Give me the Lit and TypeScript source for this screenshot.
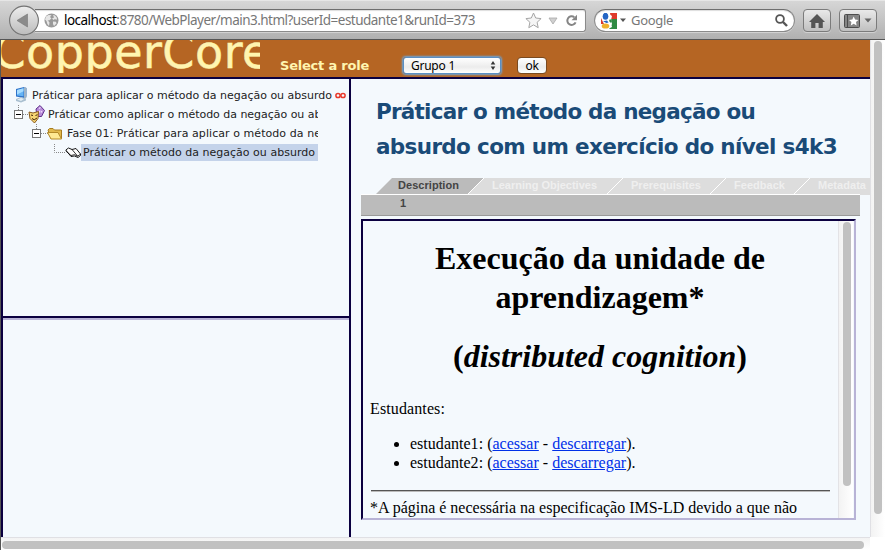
import { LitElement, html, css, svg } from "lit";
import { customElement, property } from "lit/decorators.js";

/** A single line of text whose tracking is adjusted to fill the given width. */
@customElement("fit-text")
class FitText extends LitElement {
  @property({ type: Number }) width = 0;
  static styles = css`
    :host { display: inline-block; white-space: nowrap; flex: none; text-align: left; }
    .run { display: inline-block; }
  `;
  render() {
    return html`<span class="run"><slot></slot></span>`;
  }
  firstUpdated() {
    const run = this.renderRoot.querySelector(".run") as HTMLElement;
    const count = (this.textContent || "").length;
    const natural = run.getBoundingClientRect().width;
    if (natural > 0 && count > 1) {
      this.style.letterSpacing = `${(this.width - natural) / count}px`;
    }
  }
}

@customElement("browser-toolbar")
class BrowserToolbar extends LitElement {
  static styles = css`
    :host {
      display: flex; align-items: flex-start; box-sizing: border-box; height: 40px; padding: 5px 0 0 9px;
      background: linear-gradient(#d6d6d6, #c6c6c6 45%, #b0b0b0);
      border-top: 1px solid #e6e6e6; border-bottom: 1px solid #555;
      font: 13px/20px "Noto Sans", sans-serif; color: #777;
    }
    svg { display: block; flex: none; }
    .back { position: relative; margin-top: -1px; }
    .field {
      box-sizing: border-box; height: 23px; margin-top: 3px; display: flex; align-items: center;
      background: #fff; border: 1px solid #8a8a8a; border-top-color: #6e6e6e;
      box-shadow: inset 0 1px 1px #ddd, 0 1px 0 #d2d2d2;
    }
    .url { width: 551px; margin-left: -5px; border-left: 0; border-radius: 0 3px 3px 0; padding-left: 9px; }
    .url fit-text { margin-left: 5px; width: 411px; font-size: 13.5px; margin-top: -1px; }
    .host { color: #000; }
    .star { margin-left: 50px; }
    .drop { margin-left: 6px; }
    .reload { margin-left: 7px; }
    .search { width: 201px; margin-left: 8px; border-radius: 12px; padding-left: 6px; }
    .search .arrow { margin-left: 2px; }
    .search fit-text { margin-left: 4px; width: 42px; margin-top: -1px; }
    .lens { margin-left: 102px; }
    .button {
      box-sizing: border-box; height: 23px; margin-top: 3px; border: 1px solid #7b7b7b; border-radius: 4px;
      background: linear-gradient(#e9e9e9, #c0c0c0); display: flex; align-items: center; justify-content: center;
      box-shadow: 0 1px 0 #d2d2d2;
    }
    .home { width: 28px; margin-left: 8px; }
    .marks { width: 38px; margin-left: 8px; gap: 4px; }
  `;
  render() {
    return html`
      <svg class="back" width="31" height="31" viewBox="0 0 31 31">
        <defs><linearGradient id="b" x2="0" y2="1"><stop stop-color="#ededed" /><stop offset="1" stop-color="#bcbcbc" /></linearGradient></defs>
        <circle cx="15" cy="15.5" r="14.4" fill="url(#b)" stroke="#737373" stroke-width="1.1" />
        <path d="M8 15.5 18.5 9v13z" fill="#8b8b8b" stroke="#777" stroke-width=".6" />
      </svg>
      <div class="field url">
        <svg width="15" height="15" viewBox="0 0 15 15">
          <circle cx="7.5" cy="7.5" r="7" fill="#999" />
          <path d="M2 3.5 4.5 2l3 .3L6 4l1.5 1.5L5 7.5 3.5 7 5.5 9.5 5 13 3.3 11 2.5 8 1 6.5zM9 2l2 .5 2 2.5-.5 2L11 6 9.5 7 8 5.5l2-1zM9 8.500l3 .3.5 1.700L10 13 9 11z" fill="#e6e6e6" />
        </svg>
        <fit-text width="411"><span class="host">localhost</span>:8780/WebPlayer/main3.html?userId=estudante1&amp;runId=373</fit-text>
        <svg class="star" width="17" height="17" viewBox="0 0 17 17">
          <path d="M8.5 1 10.7 6l5.4.6-4 3.700 1.100 5.400-4.700-2.800-4.700 2.800 1.100-5.400-4-3.700L6.300 6z" fill="#f5f5f5" stroke="#a5a5a5" />
        </svg>
        <svg class="drop" width="10" height="8" viewBox="0 0 10 8"><path d="M1 1h8L5 7z" fill="#d0d0d0" stroke="#a8a8a8" stroke-width=".8" /></svg>
        <svg class="reload" width="13" height="13" viewBox="0 0 13 13">
          <path d="M9.300 3.200A4.300 4.300 0 1 0 10.600 8.300" fill="none" stroke="#858585" stroke-width="2" />
          <path d="M12 .8V6.300H6.500z" fill="#858585" />
        </svg>
      </div>
      <div class="field search">
        <svg width="16" height="16" viewBox="0 0 16 16">
          <rect width="16" height="16" rx="1" fill="#fff" />
          <path d="M9 0h7v6H10z" fill="#de3a2b" /><path d="M10 6h6v10H8l3-5z" fill="#2f8a43" />
          <path d="M0 5v6h3z" fill="#d63b2c" />
          <path d="M8 1l3 2-1 4-3 1 3 2 1 4-4 2z" fill="#fff" />
          <path d="M9 6l2 2-1 2-2-2z" fill="#2f8a43" />
          <ellipse cx="4.500" cy="3.300" rx="2.800" ry="3.500" fill="#2465c4" /><ellipse cx="4.500" cy="13" rx="3.800" ry="2.600" fill="#eeb12c" />
          <path d="M2 8.300 6 7.500l1.500 2-2 .5z" fill="#2465c4" />
        </svg>
        <svg class="arrow" width="8" height="5" viewBox="0 0 8 5"><path d="M1 .5h6L4 4z" fill="#555" /></svg>
        <fit-text width="42">Google</fit-text>
        <svg class="lens" width="13" height="13" viewBox="0 0 13 13">
          <circle cx="5" cy="5" r="3.900" fill="none" stroke="#555" stroke-width="1.800" /><path d="m8 8 4 4" stroke="#555" stroke-width="2.400" />
        </svg>
      </div>
      <div class="button home">
        <svg width="16" height="14" viewBox="0 0 16 14"><path d="M8 0 16 8h-2.200v6H9.600V9H6.400v5H2.200V8H0z" fill="#555" /></svg>
      </div>
      <div class="button marks">
        <svg width="16" height="14" viewBox="0 0 16 14">
          <rect x=".5" y=".5" width="15" height="13" rx="1" fill="#858585" stroke="#4c4c4c" /><path d="M3.500 1v12" stroke="#4c4c4c" />
          <path d="m9.700 2.500 1.400 3 3.300.4-2.400 2.200.6 3.300-2.900-1.600-2.900 1.600.6-3.300L5 5.900l3.300-.4z" fill="#fff" />
        </svg>
        <svg width="8" height="5" viewBox="0 0 8 5"><path d="M.5.500h7L4 4.500z" fill="#666" /></svg>
      </div>`;
  }
}

const computer = svg`<path d="M2 2 10 0l2.500 1v8.500L10 11l-8-1.500z" fill="#2f73c9"/><path d="M3 3 9.500 1.300v8L3 8.500z" fill="#65b4f5"/><path d="M3 3 9.500 1.300v3L3 7.500z" fill="#a6dcff"/><path d="M10 0l2.500 1v9.500L10 12.500z" fill="#9fb4c6"/><path d="M2 12 7 10l5 1.500v2L7 15.500 2 14z" fill="#a9bfd0"/><path d="m3 12.500 4-1.500 3 1-3 2z" fill="#e2edf3"/>`;
const masks = svg`<path d="M8 3.500 12 0l4.500 5-3 6H9z" fill="#b78bd8" stroke="#60308c"/><path d="m11 3 1.500-1M14 5.500l-1 1.500M12 5l-1 2" stroke="#f2dcff" stroke-width="1.300"/><path d="M1 6.500 5 7.500l5.500-1.500-.5 7L6.500 17.500 2 13z" fill="#f7d774" stroke="#8a5a1b"/><path d="m3 9.500 2 .5M7.500 10l2-.8M4 13l2.200 1.300L9 12.500" fill="none" stroke="#442408"/>`;
const folder = svg`<path d="M1 3.500 2.500 2H6l1.500 1.500H14.500V12H4z" fill="#e2b94c" stroke="#a87d20"/><path d="M.5 6H11l3.500 6.500H4z" fill="#ffe993" stroke="#b48a29"/>`;
const book = svg`<path d="M.8 4.500 3.500 2.500 7 4l4-1 4.500 5.500v1.500L13 12 9.500 10.500 6 11z" fill="#fff" stroke="#000" stroke-width=".9"/><path d="m7 4 5.500 6.500M.8 5.500 6 10l3.500-.8 3 1.500 3-2" fill="none" stroke="#000" stroke-width=".8"/>`;

@customElement("activity-tree")
class ActivityTree extends LitElement {
  static styles = css`
    :host { display: block; width: 346px; padding-top: 7px; font: 11px/19px Verdana, "DejaVu Sans", sans-serif; color: #222; }
    .row { display: flex; align-items: center; height: 19px; width: 343px; }
    .row.clip { width: 315px; overflow: hidden; }
    svg { flex: none; display: block; }
    .r1 { padding-left: 11px; box-sizing: border-box; }
    .r1 .label { margin-left: 3px; }
    .r2, .r3, .r4 { box-sizing: border-box; }
    .label { display: block; flex: none; height: 19px; }
    .inf { margin-left: 3px; }
    .sel { background: #c4d3ea; height: 17px; line-height: 18px; width: 237px; padding-left: 2px; box-sizing: border-box; }
  `;
  render() {
    const box = (x: number) => svg`<path d="M${x + 9} 9.500h7" stroke="#888" stroke-dasharray="1 1"/><rect x="${x + 0.5}" y="5.500" width="8" height="8" fill="#fff" stroke="#777"/><path d="M${x + 2} 9.500h5" stroke="#000"/>`;
    return html`
      <div class="row r1">
        <svg width="15" height="19" viewBox="0 0 15 19"><g transform="translate(0 1)">${computer}</g></svg>
        <fit-text class="label" width="300">Práticar para aplicar o método da negação ou absurdo</fit-text>
        <svg class="inf" width="11" height="7" viewBox="0 0 11 7"><g fill="none" stroke="#e8392b" stroke-width="1.500"><circle cx="3" cy="3.500" r="2.100" /><circle cx="8" cy="3.500" r="2.100" /></g></svg>
      </div>
      <div class="row clip r2">
        <svg width="45" height="19" viewBox="0 0 45 19"><path d="M15.500 0v5" stroke="#888" stroke-dasharray="1 1" />${box(11)}<g transform="translate(25 .5)">${masks}</g></svg>
        <fit-text class="label" width="304">Práticar como aplicar o método da negação ou absurdo</fit-text>
      </div>
      <div class="row clip r3">
        <svg width="64" height="19" viewBox="0 0 64 19"><path d="M33.500 0v5" stroke="#888" stroke-dasharray="1 1" />${box(29)}<g transform="translate(44 2.500)">${folder}</g></svg>
        <fit-text class="label" width="254">Fase 01: Práticar para aplicar o método da ne</fit-text>
      </div>
      <div class="row clip r4">
        <svg width="78" height="19" viewBox="0 0 78 19"><path d="M51.500 1v8.500H62" fill="none" stroke="#888" stroke-dasharray="1 1" /><g transform="translate(62 2.500)">${book}</g></svg>
        <div class="sel"><fit-text width="232">Práticar o método da negação ou absurdo</fit-text></div>
      </div>`;
  }
}

@customElement("unit-page")
class UnitPage extends LitElement {
  static styles = css`
    :host {
      display: flex; box-sizing: border-box; width: 495px; height: 301px; overflow: hidden;
      border: 2px solid #0b0040; border-right-color: #b8b3d6; border-bottom-color: #b8b3d6;
      font: 16px/18px "Liberation Serif", serif; color: #000;
    }
    .body { width: 460px; padding: 18px 8px 0 7px; flex: none; }
    h1 { margin: 0 0 20px; font-size: 32px; line-height: 39px; text-align: center; }
    h1 fit-text { height: 39px; display: block; margin: 0 auto; width: max-content; }
    .p { height: 18px; margin-top: 24px; display: block; }
    ul { margin: 16px 0 0; padding-left: 40px; line-height: 19px; }
    li { height: 19px; }
    a { color: #0030e8; text-decoration: underline; }
    hr { margin: 18px 0 7px 1px; border: 0; border-top: 1px solid #555; border-bottom: 1px solid #bbb; }
    .track { width: 14px; border-left: 1px solid #e3e3e6; background: linear-gradient(90deg, #f3f3f3, #fff); display: flex; justify-content: center; padding-top: 1px; }
    .thumb { width: 8px; height: 264px; border-radius: 4px; background: #c1c1c1; margin-left: 1px; }
  `;
  render() {
    return html`
      <div class="body">
        <h1><fit-text width="330">Execução da unidade de</fit-text><fit-text width="209">aprendizagem*</fit-text></h1>
        <h1><fit-text width="294">(<i>distributed cognition</i>)</fit-text></h1>
        <fit-text class="p" width="75">Estudantes:</fit-text>
        <ul>
          ${["estudante1", "estudante2"].map(
            (s) => html`<li><fit-text width="225.5">${s}: (<a>acessar</a> - <a>descarregar</a>).</fit-text></li>`
          )}
        </ul>
        <hr />
        <fit-text width="427">*A página é necessária na especificação IMS-LD devido a que não</fit-text>
      </div>
      <div class="track"><div class="thumb"></div></div>`;
  }
}

@customElement("app-root")
class AppRoot extends LitElement {
  static styles = css`
    :host { display: block; width: 885px; height: 550px; overflow: hidden; background: #fff; }
    .main { display: grid; grid-template-columns: 869px 15px; grid-template-rows: 497px 13px; border-left: 1px solid #555; }
    .page { background: #f4f9fd; overflow: hidden; }
    .banner { height: 37px; background: #b56523; display: flex; overflow: hidden; font-family: Verdana, "DejaVu Sans", sans-serif; }
    .logo {
      width: 259px; height: 33px; overflow: hidden; font: 46px/54px Verdana, "DejaVu Sans", sans-serif;
      letter-spacing: .5px; color: #fff5b0; -webkit-text-stroke: .5px #fff5b0; text-indent: -7.5px; white-space: nowrap;
    }
    .logo span { display: block; margin-top: -15px; }
    .role { margin: 16px 0 0 20px; font-size: 13px; line-height: 20px; font-weight: bold; color: #fff5b0; width: 89px; }
    .select {
      box-sizing: border-box; margin: 17px 0 0 34px; width: 98px; height: 17px; border: 1px solid #5a8fc4; border-radius: 3px;
      box-shadow: 0 0 2px 1px #6aa6dc; background: linear-gradient(#fff, #ececec 60%, #fff); color: #000;
      display: flex; align-items: center; justify-content: space-between; padding: 0 4px 0 7px; font: 12px/15px "Noto Sans", sans-serif;
    }
    .ok {
      box-sizing: border-box; margin: 17px 0 0 16px; width: 30px; height: 17px; border: 1px solid #7a4a20; border-radius: 4px;
      background: linear-gradient(#fff, #ececec 60%, #fff); color: #000; text-align: center; font: 12px/15px "Noto Sans", sans-serif;
    }
    .columns { display: flex; border-top: 2px solid #0b0040; height: 458px; }
    .left { box-sizing: border-box; width: 350px; border: solid #0b0040; border-width: 0 2px; }
    .top { height: 237px; border-bottom: 2px solid #0b0040; }
    .bottom { border-top: 2px solid #b8b3d6; }
    .right { width: 519px; padding-left: 10px; box-sizing: border-box; }
    h2 { margin: 15px 0 0 15px; font: bold 21.5px/35px Verdana, "DejaVu Sans", sans-serif; color: #1a4b78; height: 84px; }
    h2 fit-text { display: block; height: 35px; }
    .tabs { display: grid; width: 509px; height: 17px; font: bold 11px/15px "Liberation Sans", sans-serif; color: #efefef; }
    .tabs > * { grid-area: 1 / 1; }
    .shape { display: block; }
    .names { display: flex; padding-left: 37px; }
    .names .on { color: #444; margin-right: 33px; }
    .n2 { margin-right: 34px; } .n3 { margin-right: 33px; } .n4 { margin-right: 33px; }
    .bar { box-sizing: border-box; width: 499px; height: 21px; background: #bbb; border-bottom: 1px solid #999; padding-left: 39px; font: bold 11px/17px "Liberation Sans", sans-serif; color: #444; margin-bottom: 3px; }
    .vtrack { border-left: 1px solid #e0e0e4; background: linear-gradient(90deg, #f3f3f3, #fff); padding: 1px 0 0 3px; }
    .vthumb { width: 8px; height: 473px; border-radius: 4px; background: #c1c1c1; }
    .htrack { border-top: 1px solid #e0e0e4; background: linear-gradient(#f3f3f3, #fff); padding: 3px 0 0 1px; height: 9px; }
    .hthumb { width: 862px; height: 8px; border-radius: 4px; background: #c1c1c1; }
  `;
  render() {
    return html`
      <browser-toolbar></browser-toolbar>
      <div class="main">
        <div class="page">
          <div class="banner">
            <div class="logo"><span>CopperCore</span></div>
            <fit-text class="role" width="89">Select a role</fit-text>
            <div class="select"><fit-text width="44">Grupo 1</fit-text>
              <svg width="6" height="9" viewBox="0 0 6 9"><path d="M3 0l2.300 3.400H.7zM3 9 .7 5.600h4.600z" fill="#333" /></svg>
            </div>
            <div class="ok"><fit-text width="13">ok</fit-text></div>
          </div>
          <div class="columns">
            <div class="left">
              <div class="top"><activity-tree></activity-tree></div>
              <div class="bottom"></div>
            </div>
            <div class="right">
              <h2><fit-text width="379">Práticar o método da negação ou</fit-text><fit-text width="461">absurdo com um exercício do nível s4k3</fit-text></h2>
              <div class="tabs">
                <svg class="shape" width="509" height="17" viewBox="0 0 509 17">
                  <path d="M107 16 123 0H509V17H499V16z" fill="#ddd" /><path d="M15 16 31 0H123L107 16z" fill="#bbb" />
                  <path d="M0 16.500H499M107 16 123 0M246 16 262 0M349 16 365 0M433 16 449 0" stroke="#fff" />
                </svg>
                <div class="names">
                  <fit-text class="on" width="61">Description</fit-text>
                  <fit-text class="n2" width="105">Learning Objectives</fit-text>
                  <fit-text class="n3" width="70">Prerequisites</fit-text>
                  <fit-text class="n4" width="51">Feedback</fit-text>
                  <fit-text width="48">Metadata</fit-text>
                </div>
              </div>
              <div class="bar">1</div>
              <unit-page></unit-page>
            </div>
          </div>
        </div>
        <div class="vtrack"><div class="vthumb"></div></div>
        <div class="htrack"><div class="hthumb"></div></div>
      </div>`;
  }
}
